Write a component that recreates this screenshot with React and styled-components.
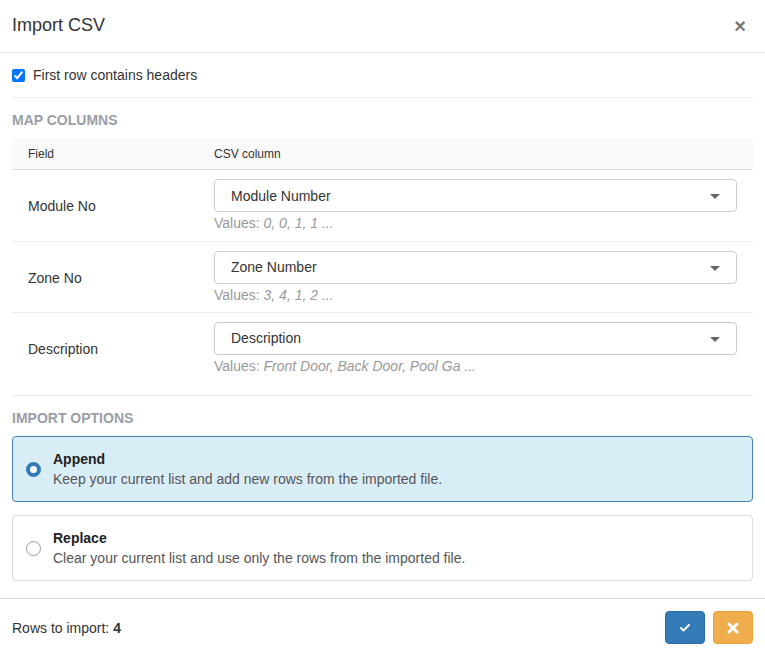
import React, { useState } from 'react';
import styled, { createGlobalStyle } from 'styled-components';
import { Check, X } from 'lucide-react';

const GlobalStyle = createGlobalStyle`
  html, body {
    margin: 0;
    padding: 0;
    background: #fff;
  }
  body {
    font-family: "Liberation Sans", Arial, sans-serif;
    font-size: 14px;
    color: #333;
  }
  * { box-sizing: border-box; }
`;

const mappings = [
  { field: 'Module No', column: 'Module Number', values: '0, 0, 1, 1 ...' },
  { field: 'Zone No', column: 'Zone Number', values: '3, 4, 1, 2 ...' },
  { field: 'Description', column: 'Description', values: 'Front Door, Back Door, Pool Ga ...' },
];

const options = [
  { id: 'append', title: 'Append', text: 'Keep your current list and add new rows from the imported file.' },
  { id: 'replace', title: 'Replace', text: 'Clear your current list and use only the rows from the imported file.' },
];

const App = () => {
  const [headers, setHeaders] = useState(true);
  const [mode, setMode] = useState('append');

  return (
    <>
      <GlobalStyle />
      <Modal>
        <Header>
          <Title>Import CSV</Title>
          <CloseButton>×</CloseButton>
        </Header>

        <Body>
          <CheckRow>
            <input type="checkbox" checked={headers} onChange={e => setHeaders(e.target.checked)} />
            First row contains headers
          </CheckRow>

          <Section>
            <SectionTitle>Map columns</SectionTitle>
            <Table>
              <HeadRow>
                <HeadCell>Field</HeadCell>
                <HeadCell>CSV column</HeadCell>
              </HeadRow>
              {mappings.map(m => (
                <Row key={m.field}>
                  <FieldName>{m.field}</FieldName>
                  <div>
                    <Select>
                      {m.column}
                      <Caret />
                    </Select>
                    <Values>Values: <em>{m.values}</em></Values>
                  </div>
                </Row>
              ))}
            </Table>
          </Section>

          <SectionTitle>Import options</SectionTitle>
          <Options>
            {options.map(o => (
              <Option key={o.id} selected={mode === o.id} onClick={() => setMode(o.id)}>
                <Radio selected={mode === o.id} />
                <div>
                  <OptionTitle>{o.title}</OptionTitle>
                  <OptionText>{o.text}</OptionText>
                </div>
              </Option>
            ))}
          </Options>
        </Body>

        <Footer>
          <span>Rows to import: <b>4</b></span>
          <Buttons>
            <ActionButton color="#337ab7" border="#2e6da4">
              <Check size={12} strokeWidth={4} />
            </ActionButton>
            <ActionButton color="#f0ad4e" border="#eea236">
              <X size={16} strokeWidth={4.5} />
            </ActionButton>
          </Buttons>
        </Footer>
      </Modal>
    </>
  );
};

const Modal = styled.div`
  width: 765px;
  height: 656px;
  background: #fff;
  border-radius: 6px;
  display: flex;
  flex-direction: column;
  overflow: hidden;
`;

const Header = styled.div`
  display: flex;
  align-items: center;
  justify-content: space-between;
  height: 53px;
  padding: 0 19px 1px 12px;
  border-bottom: 1px solid #e5e5e5;
`;

const Title = styled.h4`
  margin: 0;
  font-size: 18px;
  font-weight: 400;
  color: #333;
`;

const CloseButton = styled.span`
  font-size: 20px;
  font-weight: 700;
  color: #777;
  line-height: 1;
  padding-top: 1px;
`;

const Body = styled.div`
  flex: 1;
  padding: 0 12px;
`;

const CheckRow = styled.label`
  display: flex;
  align-items: center;
  gap: 8px;
  height: 45px;
  font-size: 14px;
  border-bottom: 1px solid #eee;

  input {
    margin: 0;
    width: 13px;
    height: 13px;
  }
`;

const Section = styled.div`
  padding-bottom: 12px;
  border-bottom: 1px solid #eee;
`;

const SectionTitle = styled.div`
  font-size: 14px;
  font-weight: 700;
  text-transform: uppercase;
  color: #9a9ea6;
  padding: 14px 0 10px;
`;

const Table = styled.div`
  display: flex;
  flex-direction: column;
`;

const HeadRow = styled.div`
  display: grid;
  grid-template-columns: 186px 1fr;
  align-items: center;
  height: 32px;
  padding: 0 16px;
  background: #f9f9f9;
  border-bottom: 1px solid #ddd;
`;

const HeadCell = styled.div`
  font-size: 12px;
  color: #333;
`;

const Row = styled.div`
  display: grid;
  grid-template-columns: 186px 1fr;
  align-items: center;
  height: 71px;
  padding: 0 16px 0 16px;
  & + & {
    border-top: 1px solid #eee;
  }
`;

const FieldName = styled.div`
  font-size: 14px;
  padding-top: 1px;
`;

const Select = styled.div`
  position: relative;
  display: flex;
  align-items: center;
  height: 33px;
  padding: 0 16px;
  border: 1px solid #ccc;
  border-radius: 4px;
  font-size: 14px;
  color: #333;
`;

const Caret = styled.span`
  position: absolute;
  right: 16px;
  top: 14px;
  width: 0;
  height: 0;
  border-left: 5px solid transparent;
  border-right: 5px solid transparent;
  border-top: 5px solid #666;
`;

const Values = styled.div`
  font-size: 14px;
  color: #999;
  line-height: 18px;
  margin-top: 2px;
`;

const Options = styled.div`
  display: flex;
  flex-direction: column;
  gap: 13px;
`;

const Option = styled.div`
  display: flex;
  align-items: center;
  gap: 12px;
  height: 66px;
  padding: 0 13px 0 13px;
  border: 1px solid ${p => (p.selected ? '#4b80b0' : '#ddd')};
  background: ${p => (p.selected ? '#d9edf7' : '#fff')};
  border-radius: 4px;
  cursor: pointer;
`;

const Radio = styled.span`
  flex: none;
  width: 15px;
  height: 15px;
  border-radius: 50%;
  margin-top: 1px;
  border: ${p => (p.selected ? '4px solid #337ab7' : '1px solid #999')};
  background: #fff;
`;

const OptionTitle = styled.div`
  font-weight: 700;
  font-size: 14px;
  line-height: 19px;
  color: #222;
`;

const OptionText = styled.div`
  font-size: 14px;
  line-height: 20px;
  color: #555;
`;

const Footer = styled.div`
  display: flex;
  align-items: center;
  justify-content: space-between;
  height: 58px;
  padding: 0 12px;
  border-top: 1px solid #ddd;
  font-size: 14px;
`;

const Buttons = styled.div`
  display: flex;
  gap: 8px;
`;

const ActionButton = styled.button`
  display: flex;
  align-items: center;
  justify-content: center;
  width: 40px;
  height: 33px;
  border: 1px solid ${p => p.border};
  background: ${p => p.color};
  color: #fff;
  border-radius: 4px;
  padding: 0;
`;

export default App;
